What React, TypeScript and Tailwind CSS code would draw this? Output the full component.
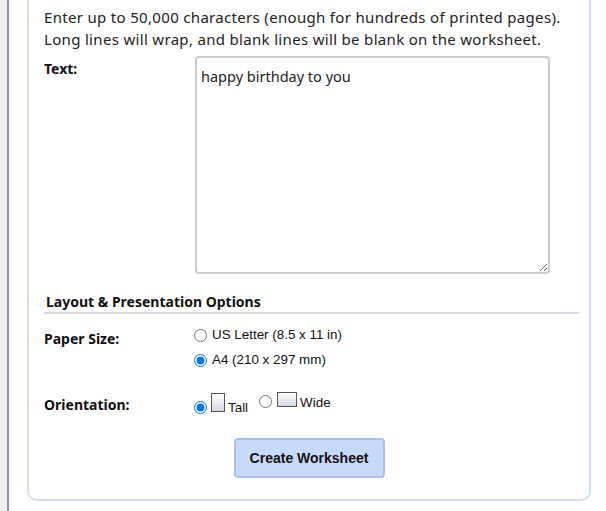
import React from 'react';

function TallIcon() {
  return (
    <span className="block w-[14px] h-[19px] border border-[#555] bg-gradient-to-b from-white to-[#d6d6e4]" />
  );
}

function WideIcon() {
  return (
    <span className="block w-[20px] h-[15px] border border-[#555] bg-gradient-to-b from-white to-[#d6d6e4]" />
  );
}

export default function App() {
  return (
    <div className="w-[606px] h-[511px] flex bg-white overflow-hidden" style={{ fontFamily: '"Noto Sans", sans-serif' }}>
      <div className="w-[7px] bg-[#efefef]" />
      <div className="w-[2px] bg-[#8d8db4]" />
      <div className="flex-1 pl-[18px] pr-[15px]">
        <div className="h-[501px] border-2 border-t-0 border-[#d2ddf5] rounded-b-[10px] pl-[15px] pr-[9px] pt-[6px]">
          <p className="text-[15px] leading-[22px] text-[#222] tracking-[0.32px]">
            Enter up to 50,000 characters (enough for hundreds of printed pages).
            <br />
            Long lines will wrap, and blank lines will be blank on the worksheet.
          </p>

          <div className="flex mt-[6px]">
            <div className="w-[151px] text-[14px] font-bold text-[#111] pt-[2px]">Text:</div>
            <textarea
              className="w-[355px] h-[218px] border-2 border-[#cbcbcb] rounded-[4px] px-[4px] pt-[8px] text-[14.5px] leading-[20px] text-[#222] outline-none"
              defaultValue="happy birthday to you"
            />
          </div>

          <div className="mt-[15px] mr-[1px] border-b-2 border-[#d8d8e0] pl-[2px] pt-[3px] text-[14px] font-bold text-[#111] leading-[20px]">
            Layout &amp; Presentation Options
          </div>

          <div className="flex mt-[13px] text-[13px]" style={{ fontFamily: '"Liberation Sans", Arial, sans-serif' }}>
            <div className="w-[150px] pt-[2px] text-[14px] leading-[20px] font-bold text-[#111]" style={{ fontFamily: '"Noto Sans", sans-serif' }}>
              Paper Size:
            </div>
            <div className="flex flex-col gap-[9px] text-[#111] text-[13.4px]">
              <label className="flex items-center gap-[5px] h-[16px]">
                <input type="radio" name="paper" className="w-[13px] h-[13px] m-0" />
                US Letter (8.5 x 11 in)
              </label>
              <label className="flex items-center gap-[5px] h-[16px]">
                <input type="radio" name="paper" defaultChecked className="w-[13px] h-[13px] m-0" />
                A4 (210 x 297 mm)
              </label>
            </div>
          </div>

          <div className="flex mt-[26px] text-[13.4px]" style={{ fontFamily: '"Liberation Sans", Arial, sans-serif' }}>
            <div className="w-[150px] pt-[1px] text-[14px] leading-[20px] font-bold text-[#111]" style={{ fontFamily: '"Noto Sans", sans-serif' }}>
              Orientation:
            </div>
            <div className="flex items-start h-[20px] text-[#111]">
              <input type="radio" name="orient" defaultChecked className="w-[13px] h-[13px] mt-[7px] mr-[4px]" />
              <span className="mt-[-1px]"><TallIcon /></span>
              <span className="mt-[6px] ml-[3px] leading-[16px]">Tall</span>
              <input type="radio" name="orient" className="w-[13px] h-[13px] mt-[1px] ml-[11px] mr-[5px]" />
              <span className="mt-[-2px]"><WideIcon /></span>
              <span className="mt-[1px] ml-[3px] leading-[16px]">Wide</span>
            </div>
          </div>

          <div className="flex justify-center mt-[23px] pr-[6px]">
            <button
              className="w-[151px] h-[40px] bg-[#c9d9fa] border-2 border-[#a9c0ee] rounded-[4px] text-[14px] font-bold text-[#111]"
              style={{ fontFamily: '"Liberation Sans", Arial, sans-serif' }}
            >
              Create Worksheet
            </button>
          </div>
        </div>
      </div>
    </div>
  );
}
